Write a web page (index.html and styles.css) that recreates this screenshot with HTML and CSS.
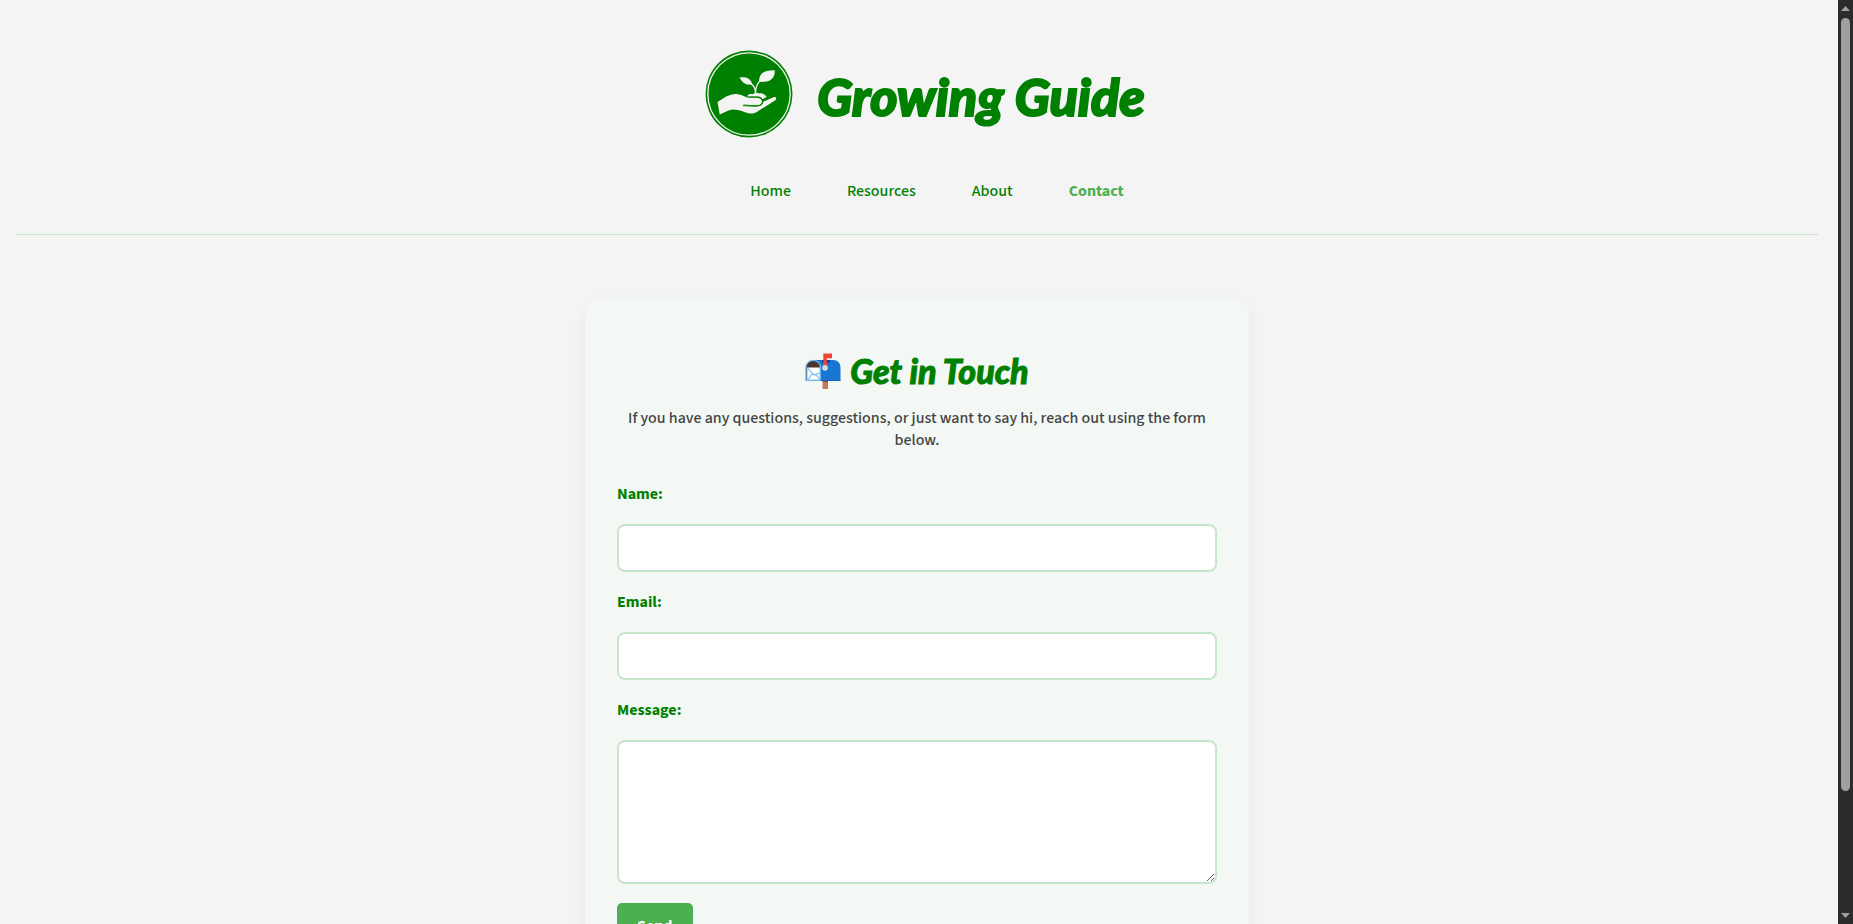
FILE: index.html
```html
<!DOCTYPE html>
<html lang="en">
<head>
<meta charset="utf-8">
<title>Growing Guide – Contact</title>
<link rel="stylesheet" href="styles.css">
</head>
<body>
<div class="window">
  <div class="page">
    <header class="header">
      <div class="brand">
        <svg class="logo" viewBox="0 0 88 88" aria-hidden="true">
          <circle cx="44" cy="44" r="43.5" fill="#008000"/>
          <circle cx="44" cy="44" r="41.2" fill="none" stroke="#f3f4f3" stroke-width="1.3"/>
          <g fill="#f3f4f3">
            <path d="M12.5 52C20 47 26 43 33 44.2C36 44.7 39 45.8 42 47.6H51C55 47.6 57.6 50 56.8 52.5C56 54.8 53.5 55.3 50 55.2L38.5 54.5V55.3L50 56.2C55 56.4 58 55 58.2 51.8L68 47.4C71 46.2 72.4 48.8 70.3 50.2L52.5 61.5C48.5 64.2 45 64 40 62.2C33 59.5 28 58.5 23.5 60.5L14.7 64.5Z"/>
            <path d="M42.2 46.4C43 44.2 45.5 43.8 48 44.2C50 42.4 53 42.6 54.2 43.6C56.5 42.4 58.5 43.5 61.8 46.8L57.6 49.3C56.5 46.6 54 46.3 51 46.4Z"/>
            <path d="M34.5 27.5C40 26.8 46 28 47 34.2C42 35.2 38 34 34.5 27.5Z"/>
            <path d="M69.8 20.2C70 28.5 65 32.5 54 31.8C54 23.5 59 20 69.8 20.2Z"/>
          </g>
          <path d="M45.5 33.6C49 35 50.6 38 50.6 45M55 31C51.8 34 50.8 38 50.6 42" fill="none" stroke="#f3f4f3" stroke-width="1.3"/>
          <path d="M38 55.700L50 56.200C55 56.200 57.800 54.500 57.800 51.500C57.800 49 55.500 47.200 51 47.200H43" fill="none" stroke="#008000" stroke-width="1"/>
        </svg>
        <h1 class="brand-name">Growing Guide</h1>
      </div>
      <nav class="nav">
        <a href="#home">Home</a>
        <a href="#resources">Resources</a>
        <a href="#about">About</a>
        <a href="#contact" class="active" aria-current="page">Contact</a>
      </nav>
    </header>
    <main class="card">
      <h2 class="title"><svg class="mailbox" viewBox="0 0 36 36" aria-hidden="true">
          <path d="M17.5 27h5.5v9h-5.5z" fill="#c47a60"/>
          <path d="M17.5 27H23v2.8l-5.5-1.4z" fill="#8d4f40"/>
          <path d="M8 7h20.500A7 7 0 0 1 35.500 14v14H8z" fill="#1976d2"/>
          <path d="M1 27.300V14.500a7.200 7.200 0 0 1 14.400 0V27.300z" fill="#4e342e" stroke="#64b9f5" stroke-width="1.300"/>
          <path d="M2.200 14.500h12.600v12.300H2.200z" fill="#fff"/>
          <path d="M2.500 15l6.500 7 5.500-2M3 26.500l4.500-6.300M14.500 26l-4-4.500" fill="none" stroke="#64b9f5" stroke-width="1.100"/>
          <path d="M15.500 27.500H35.500" stroke="#1565c0"/>
          <path d="M17 7h8v2.500l-3 .8h-5z" fill="#0d47a1"/>
          <path d="M18.300.5H27v4.800h-5.200V14h-3.500z" fill="#f44336"/>
          <circle cx="20" cy="14.800" r="2.900" fill="#cfd8dc"/>
        </svg> Get in Touch</h2>
      <p class="intro">If you have any questions, suggestions, or just want to say hi, reach out using the form below.</p>
      <form class="form">
        <label for="name">Name:</label>
        <input id="name" type="text">
        <label for="email">Email:</label>
        <input id="email" type="email">
        <label for="message">Message:</label>
        <textarea id="message"></textarea>
        <button type="button">Send</button>
      </form>
    </main>
  </div>
  <div class="scrollbar" aria-hidden="true">
    <svg class="arrow" viewBox="0 0 9 5"><path d="M4.500 0L9 5H0z"/></svg>
    <div class="track"><div class="thumb"></div></div>
    <svg class="arrow" viewBox="0 0 9 5"><path d="M0 0h9L4.500 5z"/></svg>
  </div>
</div>
</body>
</html>
```
FILE: styles.css
```css
* { box-sizing: border-box; }

body {
  margin: 0;
  background: #f4f4f4;
  color: #444;
  font: 500 16px/22px "Source Sans 3", "Source Sans Pro", "Noto Sans CJK SC", sans-serif;
}

.window { display: flex; height: 100vh; }

.page {
  flex: 1;
  overflow: hidden;
  padding: 16px 20px 16px 16px;
}

.header {
  padding: 34px 0 32px;
  border-bottom: 1px solid #c8e6c9;
}

.brand {
  display: flex;
  align-items: center;
  justify-content: center;
  gap: 24px;
  padding-left: 16px;
}

.logo { width: 88px; height: 88px; }

.brand-name, .title {
  margin: 0;
  color: #008000;
  font-family: Lato, sans-serif;
  font-style: italic;
  font-weight: 900;
}

.brand-name {
  padding-top: 4px;
  font-size: 52px;
  line-height: 60px;
  -webkit-text-stroke: 2px #008000;
}

.nav {
  display: flex;
  justify-content: center;
  gap: 56px;
  padding: 42px 0 0 40px;
}

.nav a { color: #008000; text-decoration: none; }
.nav .active { color: #4caf50; font-weight: 700; }

.card {
  max-width: 664px;
  margin: 64px auto;
  padding: 48px 32px;
  border-radius: 16px;
  background: #f3f8f4;
  box-shadow: 0 4px 16px rgba(0, 0, 0, 0.05);
}

.title {
  display: flex;
  align-items: center;
  justify-content: center;
  gap: 9px;
  font-size: 34px;
  line-height: 48px;
  -webkit-text-stroke: 1px #008000;
}

.mailbox { width: 36px; height: 36px; }

.intro { margin: 12px 0 32px; text-align: center; }

.form { display: flex; flex-direction: column; }

.form label { margin-bottom: 19px; color: #008000; font-weight: 700; }

.form input, .form textarea {
  width: 100%;
  height: 48px;
  margin-bottom: 19px;
  padding: 12px;
  border: 2px solid #c8e6c9;
  border-radius: 8px;
  background: #fff;
  color: #444;
  font: inherit;
}

.form textarea { height: 144px; resize: vertical; }

.form button {
  align-self: flex-start;
  padding: 12px 20px;
  border: 0;
  border-radius: 5px;
  background: #4caf50;
  color: #fff;
  font: inherit;
  font-weight: 700;
}

.scrollbar {
  display: flex;
  flex-direction: column;
  align-items: center;
  width: 15px;
  padding: 6px 0;
  background: #2c2c2c;
}

.arrow { width: 9px; height: 5px; fill: #9f9f9f; }
.track { flex: 1; padding: 7px 0; }
.thumb { width: 9px; height: 87%; border-radius: 5px; background: #9f9f9f; }
```
